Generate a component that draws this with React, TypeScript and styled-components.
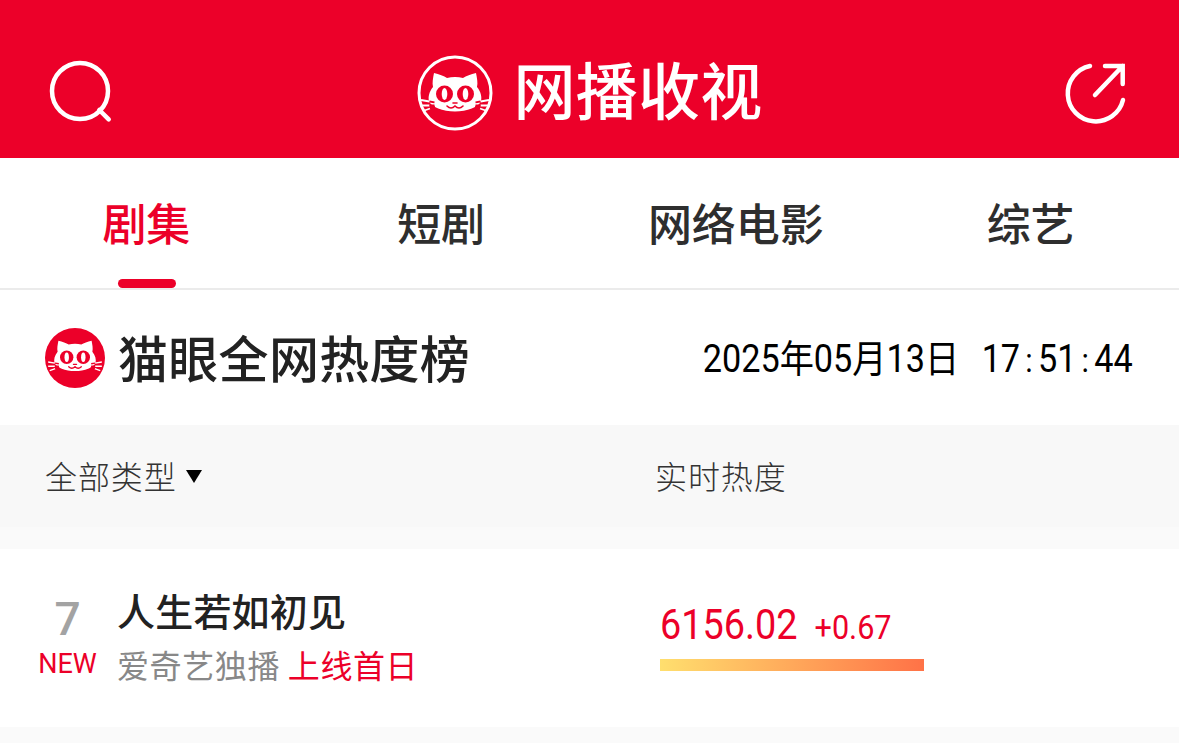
import styled, { createGlobalStyle } from "styled-components";

const RED = "#ec0029";
const CJK = `"Noto Sans CJK SC", "Noto Sans", sans-serif`;
const DIGITS = `Roboto, "Noto Sans CJK SC", sans-serif`;
const TABS = ["剧集", "短剧", "网络电影", "综艺"];

const GlobalStyle = createGlobalStyle`
  html, body {
    margin: 0;
    padding: 0;
    background: #fff;
    overflow: hidden;
  }
  body {
    font-family: ${CJK};
  }
`;

const Page = styled.div`
  width: 1179px;
  height: 743px;
  overflow: hidden;
`;

const Header = styled.header`
  height: 158px;
  background: ${RED};
  display: flex;
  align-items: center;
  justify-content: space-between;
  padding: 26px 48px 0;
  box-sizing: border-box;
`;

const Brand = styled.div`
  display: flex;
  align-items: center;
  gap: 20px;
  margin: 2px 0 0 1px;
  color: #fff;
`;

const BrandText = styled.span`
  font-size: 62px;
  line-height: 66px;
  margin-bottom: 10px;
  font-weight: 500;
  letter-spacing: 0.3px;
`;

const Tabs = styled.nav`
  height: 132px;
  display: grid;
  grid-template-columns: repeat(4, 1fr);
  border-bottom: 2px solid #ebebeb;
  box-sizing: border-box;
`;

const Tab = styled.div<{ $active?: boolean }>`
  display: flex;
  align-items: center;
  justify-content: center;
  position: relative;
  font-size: 44px;
  font-weight: 500;
  padding: 0 2px 3px 0;
  color: ${({ $active }) => ($active ? RED : "#2e2e2e")};

  &::after {
    content: "";
    display: ${({ $active }) => ($active ? "block" : "none")};
    position: absolute;
    left: 50%;
    bottom: 0;
    width: 58px;
    height: 9px;
    margin-left: -29px;
    border-radius: 5px;
    background: ${RED};
  }
`;

const TitleRow = styled.section`
  height: 135px;
  display: flex;
  align-items: center;
  justify-content: space-between;
  padding: 0 45px;
`;

const TitleLeft = styled.div`
  display: flex;
  align-items: center;
  gap: 13px;
`;

const Title = styled.h1`
  margin: 0 0 4px;
  font-size: 50px;
  font-weight: 500;
  color: #222;
  letter-spacing: 0.3px;
`;

// 38px digits squeezed to the narrow look of the original numerals
const Clock = styled.div`
  display: flex;
  align-items: baseline;
  gap: 25px;
  font-family: ${DIGITS};
  font-size: 38px;
  color: #000;
  transform: scaleX(0.9);
  transform-origin: right center;
  margin: 0 1px 4px 0;
`;

const Colon = styled.span`
  margin: 0 5.8px;
  font-size: 34px;
`;

const TableHead = styled.div`
  height: 102px;
  background: #f8f8f8;
  display: flex;
  align-items: center;
  font-size: 32px;
  font-weight: 300;
  letter-spacing: 0.9px;
  color: #333;
  padding-bottom: 3px;
  box-sizing: border-box;
`;

const TypeCell = styled.div`
  width: 655px;
  padding-left: 45px;
  box-sizing: border-box;
  display: flex;
  align-items: center;
  gap: 9px;
`;

const Caret = styled.i`
  width: 0;
  height: 0;
  border-left: 8px solid transparent;
  border-right: 8px solid transparent;
  border-top: 13px solid #000;
  margin-top: 4px;
`;

const Spacer = styled.div<{ $h: number }>`
  height: ${({ $h }) => $h}px;
  background: #fafafa;
`;

const Row = styled.article`
  height: 178px;
  display: flex;
  background: #fff;
`;

const RankCell = styled.div`
  width: 117px;
  padding: 44px 0 0 18px;
  box-sizing: border-box;
  display: flex;
  flex-direction: column;
  align-items: center;
`;

const RankNum = styled.div`
  font-family: ${DIGITS};
  font-size: 46px;
  line-height: 52px;
  font-weight: 500;
  color: #a3a3a3;
`;

const NewTag = styled.div`
  margin-top: 2px;
  font-family: ${DIGITS};
  font-size: 27px;
  line-height: 34px;
  color: ${RED};
`;

const NameCell = styled.div`
  width: 543px;
  padding-top: 34px;
  box-sizing: border-box;
`;

const Name = styled.div`
  font-size: 38px;
  line-height: 54px;
  font-weight: 500;
  letter-spacing: 0.2px;
  color: #222;
`;

const Sub = styled.div`
  margin-top: 2px;
  font-size: 32px;
  line-height: 50px;
  letter-spacing: 0.6px;
  color: #888;
`;

const Highlight = styled.span`
  color: ${RED};
`;

const HeatCell = styled.div`
  flex: 1;
  padding-top: 50px;
`;

const HeatLine = styled.div`
  display: flex;
  align-items: baseline;
  gap: 19px;
  font-family: ${DIGITS};
  color: ${RED};
  transform: scaleX(0.9);
  transform-origin: left center;
`;

const HeatValue = styled.span`
  font-size: 42px;
  line-height: 52px;
`;

const HeatDelta = styled.span`
  font-size: 34px;
`;

const HeatBar = styled.div`
  width: 264px;
  height: 12px;
  margin-top: 8px;
  background: linear-gradient(90deg, #ffdf6e, #ff7247);
`;

const SearchIcon = () => (
  <svg width="64" height="64" viewBox="0 0 64 64" fill="none" stroke="#fff" strokeWidth="4.500" strokeLinecap="round" overflow="visible">
    <circle cx="32" cy="31" r="28" />
    <path d="M51.300 50l9.400 9.300" />
  </svg>
);

const ShareIcon = () => (
  <svg width="64" height="64" viewBox="0 0 64 64" fill="none" stroke="#fff" strokeWidth="4.500" strokeLinecap="round" overflow="visible">
    <path d="M23 6A28 28 0 1 0 56 40" />
    <path d="M28 35L55.700 6M38 6h17.700v18" />
  </svg>
);

const CatLogo = ({ size, bg, ring, dy = 0 }: { size: number; bg: string; ring?: boolean; dy?: number }) => (
  <svg width={size} height={size} viewBox="0 0 76 76">
    <circle cx="38" cy="38" r={ring ? 36 : 38} fill={bg} stroke={ring ? "#fff" : "none"} strokeWidth="3" />
    <g transform={`translate(0 ${dy})`}>
      <path
        fill="#fff"
        d="M17 18C22 19 27 21 30 23C35 21.500 41 21.500 46 23C49 21 54 19 59 18C60 23 61 28 60 32C64 37 65 42 64 46C62 52 50 56.500 38 56.500C26 56.500 14 52 12 46C11 42 12 37 16 32C15 28 16 23 17 18Z"
      />
      <circle cx="27.500" cy="39" r="8.500" fill={bg} />
      <circle cx="48.500" cy="39" r="8.500" fill={bg} />
      <ellipse cx="27.500" cy="39" rx="2.800" ry="6" fill="#fff" />
      <ellipse cx="48.500" cy="39" rx="2.800" ry="6" fill="#fff" />
      <path d="M30 51q4 4 8 0q4 4 8 0M36 48h4" fill="none" stroke={bg} strokeWidth="1.600" strokeLinecap="round" />
      <path d="M4 45l8.500 1.500M4 50.500h8.500M6 56l7-2.500M72 45l-8.500 1.500M72 50.500h-8.500M70 56l-7-2.500" stroke="#fff" strokeWidth="1.800" />
      <path d="M12.500 46.500l5 .8M12.500 50.500h5M13 53.500l5-1.800M63.500 46.500l-5 .8M63.500 50.500h-5M63 53.500l-5-1.800" stroke={bg} strokeWidth="1.800" />
    </g>
  </svg>
);

export default function App() {
  return (
    <Page>
      <GlobalStyle />
      <Header>
        <SearchIcon />
        <Brand>
          <CatLogo size={76} bg={RED} ring />
          <BrandText>网播收视</BrandText>
        </Brand>
        <ShareIcon />
      </Header>
      <Tabs>
        {TABS.map((t, i) => (
          <Tab key={t} $active={i === 0}>
            {t}
          </Tab>
        ))}
      </Tabs>
      <TitleRow>
        <TitleLeft>
          <CatLogo size={60} bg={RED} dy={-2} />
          <Title>猫眼全网热度榜</Title>
        </TitleLeft>
        <Clock>
          <span>2025年05月13日</span>
          <span>
            17<Colon>:</Colon>51<Colon>:</Colon>44
          </span>
        </Clock>
      </TitleRow>
      <TableHead>
        <TypeCell>
          全部类型
          <Caret />
        </TypeCell>
        <div>实时热度</div>
      </TableHead>
      <Spacer $h={22} />
      <Row>
        <RankCell>
          <RankNum>7</RankNum>
          <NewTag>NEW</NewTag>
        </RankCell>
        <NameCell>
          <Name>人生若如初见</Name>
          <Sub>
            爱奇艺独播 <Highlight>上线首日</Highlight>
          </Sub>
        </NameCell>
        <HeatCell>
          <HeatLine>
            <HeatValue>6156.02</HeatValue>
            <HeatDelta>+0.67</HeatDelta>
          </HeatLine>
          <HeatBar />
        </HeatCell>
      </Row>
      <Spacer $h={20} />
    </Page>
  );
}
